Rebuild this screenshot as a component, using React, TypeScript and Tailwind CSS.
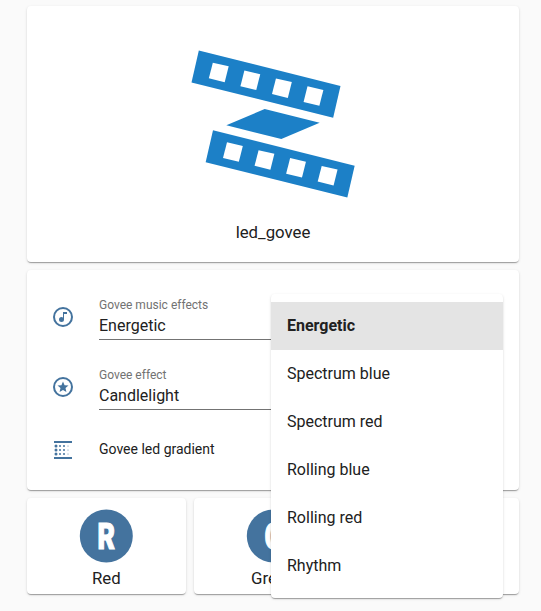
import type { ReactNode } from "react";

const cardShadow =
  "shadow-[0_2px_1px_-1px_rgba(0,0,0,0.2),0_1px_1px_0_rgba(0,0,0,0.14),0_1px_3px_0_rgba(0,0,0,0.12)]";
const card = `rounded bg-white ${cardShadow}`;

const effects = ["Energetic", "Spectrum blue", "Spectrum red", "Rolling blue", "Rolling red", "Rhythm"];
const holes = [0, 1, 2, 3];

function Strip({ x, y }: { x: number; y: number }) {
  return (
    <g transform={`translate(${x} ${y})`}>
      <path fill="#1c80c7" d="M22 0 447 106.5 425 202 0 96Z" />
      {holes.map((i) => (
        <path
          key={i}
          fill="#fff"
          transform={`translate(${i * 94.7} ${i * 23.6})`}
          d="M64 36.500 111.500 47.500 99.500 95 52 83.500Z"
        />
      ))}
    </g>
  );
}

function StripLogo() {
  return (
    <svg className="block h-[165px] w-[190px]" viewBox="0 0 570 495">
      <Strip x={34.500} y={31.500} />
      <path fill="#1c80c7" d="M254 207 419 248 304 297 139 256Z" />
      <Strip x={77} y={270.500} />
    </svg>
  );
}

function Icon({ children }: { children: ReactNode }) {
  return (
    <svg viewBox="0 0 24 24" className="size-6 shrink-0" fill="#44739e">
      {children}
    </svg>
  );
}

function MusicIcon() {
  return (
    <Icon>
      <circle cx="12" cy="12" r="9" fill="none" stroke="#44739e" strokeWidth="2" />
      <path d="M16 9V7H12V12.500C11.580 12.190 11.070 12 10.500 12A2.500 2.500 0 0 0 8 14.500A2.500 2.500 0 0 0 10.500 17A2.500 2.500 0 0 0 13 14.500V9H16Z" />
    </Icon>
  );
}

function StarIcon() {
  return (
    <Icon>
      <circle cx="12" cy="12" r="9" fill="none" stroke="#44739e" strokeWidth="2" />
      <path d="M8.580 17 9.500 13.110 6.500 10.500 10.450 10.160 12 6.500 13.550 10.130 17.500 10.470 14.500 13.080 15.420 17 12 14.930Z" />
    </Icon>
  );
}

function GradientIcon() {
  return (
    <Icon>
      <path d="M3 3H21V5H3ZM3 19H21V21H3Z" />
      {[8, 12, 16].map((y) => (
        <g key={y}>
          <circle cx="5" cy={y} r="1.500" />
          <circle cx="9" cy={y} r="1" />
          <circle cx="13" cy={y} r="1" />
          <circle cx="17" cy={y} r="0.500" />
        </g>
      ))}
    </Icon>
  );
}

function SelectRow({ icon, label, value }: { icon: ReactNode; label: string; value: string }) {
  return (
    <div className="flex h-[54px] items-start">
      <div className="flex h-10 w-12 items-end">{icon}</div>
      <div className="flex h-[51px] flex-1 flex-col border-b border-[#737373] pt-[6px]">
        <span className="text-xs leading-5 text-[#727272]">{label}</span>
        <span className="text-base leading-[22px]">{value}</span>
      </div>
    </div>
  );
}

function ColorCard({ letter, name }: { letter: string; name: string }) {
  return (
    <div className={`flex h-24 flex-1 flex-col items-center pt-[6px] ${card}`}>
      <svg viewBox="0 0 64 64" className="size-16">
        <circle cx="32.300" cy="32" r="26.500" fill="#44739e" />
        <text
          x="23.500"
          y="45"
          fontSize="36.500"
          textLength="17.500"
          lengthAdjust="spacingAndGlyphs"
          strokeWidth="1.200"
          className="fill-white stroke-white font-black"
        >
          {letter}
        </text>
      </svg>
      <span className="text-[16.8px] leading-5">{name}</span>
    </div>
  );
}

export default function App() {
  return (
    <main className="relative flex h-[611px] w-[541px] flex-col gap-2 overflow-hidden bg-[#fafafa] pt-[6px] pr-[22px] pl-[27px] font-['Roboto','Liberation_Sans',sans-serif] text-[#212121]">
      <section className={`flex h-64 flex-col items-center pt-[34px] ${card}`}>
        <div className="pl-1">
          <StripLogo />
        </div>
        <span className="mt-[15px] text-[16.8px] leading-[25px]">led_govee</span>
      </section>

      <section className={`flex h-[220px] flex-col px-6 pt-[19px] ${card}`}>
        <SelectRow icon={<MusicIcon />} label="Govee music effects" value="Energetic" />
        <div className="mt-4">
          <SelectRow icon={<StarIcon />} label="Govee effect" value="Candlelight" />
        </div>
        <div className="mt-4 flex h-10 items-center">
          <div className="w-12 pt-px">
            <GradientIcon />
          </div>
          <span className="text-sm">Govee led gradient</span>
        </div>
      </section>

      <section className="flex gap-2">
        <ColorCard letter="R" name="Red" />
        <ColorCard letter="G" name="Green" />
        <ColorCard letter="B" name="Blue" />
      </section>

      <ul
        role="listbox"
        className={`absolute top-[294px] left-[271px] h-[304px] w-[232px] py-2 ${card}`}
      >
        {effects.map((effect, i) => (
          <li
            key={effect}
            role="option"
            aria-selected={i === 0}
            className={`flex h-12 items-center px-4 text-base ${i === 0 ? "bg-[#e4e4e4] font-bold" : ""}`}
          >
            {effect}
          </li>
        ))}
      </ul>
    </main>
  );
}
